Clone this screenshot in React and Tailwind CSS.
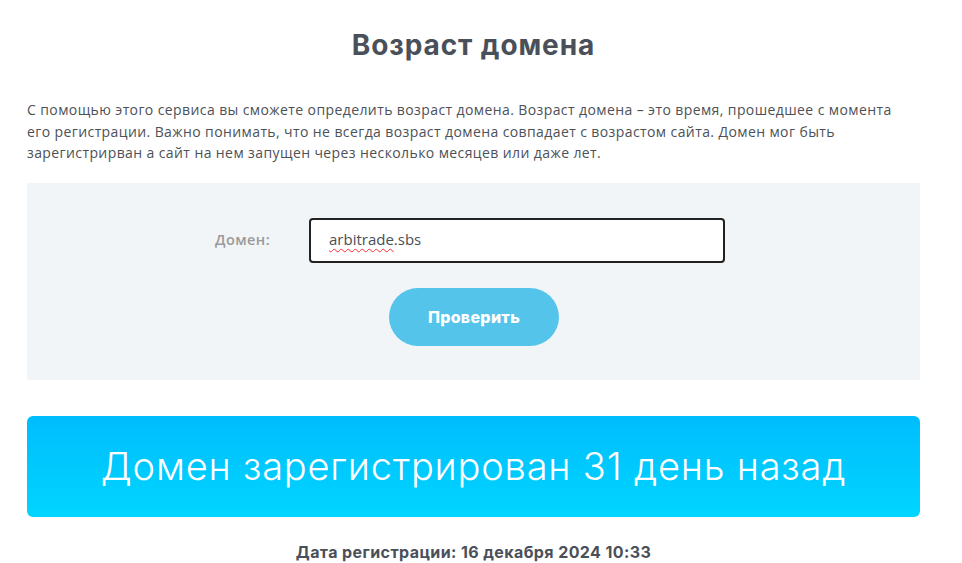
export default function App() {
  return (
    <div className="w-[962px] min-h-[563px] bg-white">
      <div className="mx-[27px] w-[893px] pt-[26px]">
        <h1 className="text-center text-[28px] font-bold leading-[38px] text-[#4a5059] font-['Inter','Noto_Sans',sans-serif] tracking-[0.9px]">
          Возраст домена
        </h1>

        <p className="mt-[35px] pr-[20px] text-[14px] leading-[21.5px] text-[#4d5157] font-['Open_Sans','Noto_Sans',sans-serif] tracking-[0.4px]">
          С помощью этого сервиса вы сможете определить возраст домена. Возраст домена – это время, прошедшее с момента его регистрации. Важно понимать, что не всегда возраст домена совпадает с возрастом сайта. Домен мог быть зарегистрирван а сайт на нем запущен через несколько месяцев или даже лет.
        </p>

        <div className="mt-[19px] h-[197px] bg-[#f2f5f7] pt-[35px] flex flex-col">
          <div className="flex items-center">
            <label className="w-[282px] pr-[39px] text-right text-[14.5px] font-semibold text-[#9a9a9a] font-['Open_Sans','Noto_Sans',sans-serif] tracking-[0.4px]">
              Домен:
            </label>
            <div className="w-[416px] h-[45px] rounded-[4px] border-2 border-[#222] bg-white flex items-center pl-[18px] pb-[1px]">
              <span className="text-[15px] text-[#4a4f55] font-['Open_Sans','Noto_Sans',sans-serif] underline decoration-wavy decoration-red-500 decoration-1 underline-offset-[3px]">
                arbitrade
              </span>
              <span className="text-[15px] text-[#4a4f55] font-['Open_Sans','Noto_Sans',sans-serif]">.sbs</span>
            </div>
          </div>
          <button className="mt-[25px] ml-[362px] w-[170px] h-[58px] rounded-full bg-[#55c4ea] text-white text-[16px] font-extrabold tracking-[0.3px] font-['Inter','Noto_Sans',sans-serif]">
            Проверить
          </button>
        </div>

        <div className="mt-[36px] h-[101px] rounded-[6px] bg-gradient-to-b from-[#00bdfd] to-[#00d5ff] flex items-center justify-center">
          <span className="text-white text-[38px] font-light font-['Inter','Noto_Sans',sans-serif] tracking-[0.8px]">
            Домен зарегистрирован 31 день назад
          </span>
        </div>

        <p className="mt-[23px] text-center text-[16px] font-bold text-[#4a5059] font-['Inter','Noto_Sans',sans-serif] tracking-[0.4px]">
          Дата регистрации: 16 декабря 2024 10:33
        </p>
      </div>
    </div>
  );
}
